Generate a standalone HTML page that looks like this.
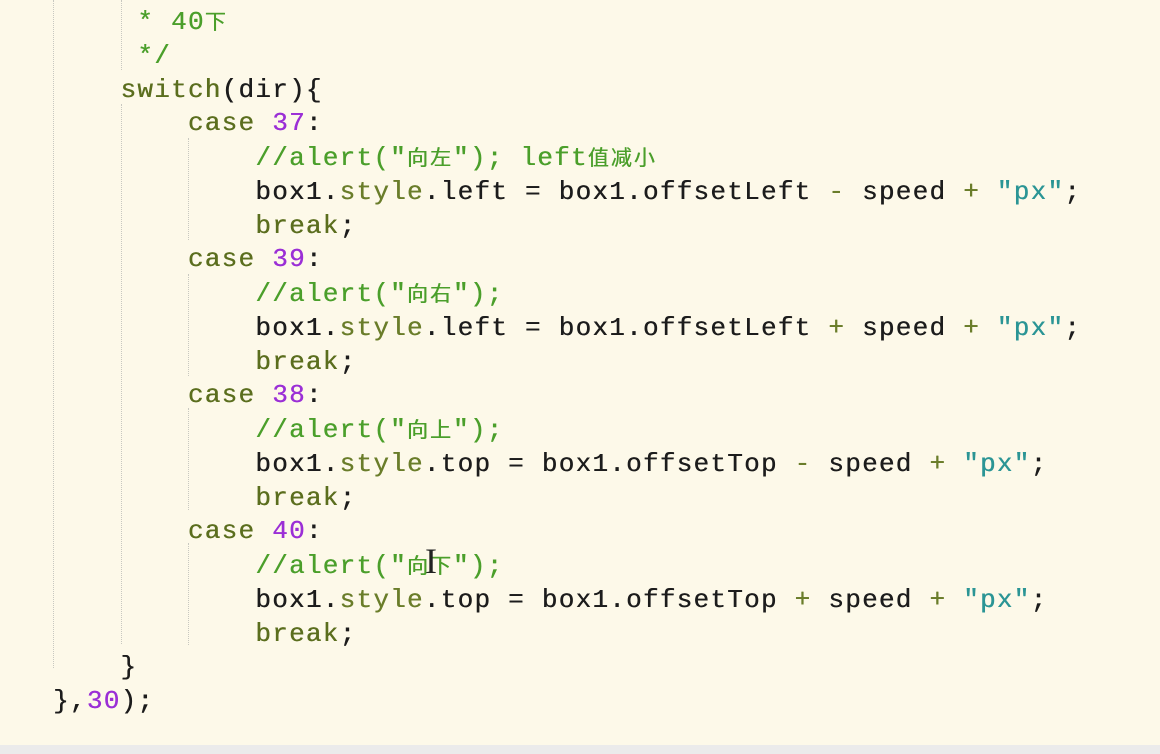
<!DOCTYPE html>
<html><head><meta charset="utf-8"><style>
html,body{margin:0;padding:0;}
body{width:1160px;height:754px;background:#fdf9e9;position:relative;overflow:hidden;}
.code{position:absolute;left:53px;top:5px;font-family:"Liberation Mono","Noto Sans CJK SC",monospace;font-size:26px;letter-spacing:1.25px;line-height:33.75px;white-space:pre;color:#1c1c1c;text-shadow:0.4px 0 0 currentColor;}
.k{color:#5b6e1e}.s{color:#6a7d2a}.c{color:#4b9f2b}.n{color:#9b2fd6}.t{color:#2b9595}
.z{font-family:"Noto Sans CJK SC",sans-serif;font-size:21px;letter-spacing:2px;}
.g{position:absolute;border-left:1px dotted #c8c8c0;width:0;}
.bar{position:absolute;left:0;top:745px;width:1160px;height:9px;background:#ebebeb;}
</style></head><body>
<div class="g" style="left:53px;top:0;height:668px"></div>
<div class="g" style="left:121px;top:0;height:70px"></div>
<div class="g" style="left:121px;top:104px;height:540px"></div>
<div class="g" style="left:188px;top:138px;height:102px"></div>
<div class="g" style="left:188px;top:274px;height:102px"></div>
<div class="g" style="left:188px;top:408px;height:102px"></div>
<div class="g" style="left:188px;top:543px;height:102px"></div>
<div class="code"><span class="c">     * 40<span class="z">下</span></span>
<span class="c">     */</span>
    <span class="k">switch</span>(dir){
        <span class="k">case</span> <span class="n">37</span>:
            <span class="c">//alert("<span class="z">向左</span>"); left<span class="z">值减小</span></span>
            box1.<span class="s">style</span>.left = box1.offsetLeft <span class="s">-</span> speed <span class="s">+</span> <span class="t">"px"</span>;
            <span class="k">break</span>;
        <span class="k">case</span> <span class="n">39</span>:
            <span class="c">//alert("<span class="z">向右</span>");</span>
            box1.<span class="s">style</span>.left = box1.offsetLeft <span class="s">+</span> speed <span class="s">+</span> <span class="t">"px"</span>;
            <span class="k">break</span>;
        <span class="k">case</span> <span class="n">38</span>:
            <span class="c">//alert("<span class="z">向上</span>");</span>
            box1.<span class="s">style</span>.top = box1.offsetTop <span class="s">-</span> speed <span class="s">+</span> <span class="t">"px"</span>;
            <span class="k">break</span>;
        <span class="k">case</span> <span class="n">40</span>:
            <span class="c">//alert("<span class="z">向下</span>");</span>
            box1.<span class="s">style</span>.top = box1.offsetTop <span class="s">+</span> speed <span class="s">+</span> <span class="t">"px"</span>;
            <span class="k">break</span>;
    }
},<span class="n">30</span>);</div>
<div style="position:absolute;left:425px;top:542px;font-family:'Liberation Serif',serif;font-size:36px;color:#222;line-height:38px">I</div>
<div class="bar"></div>
</body></html>
